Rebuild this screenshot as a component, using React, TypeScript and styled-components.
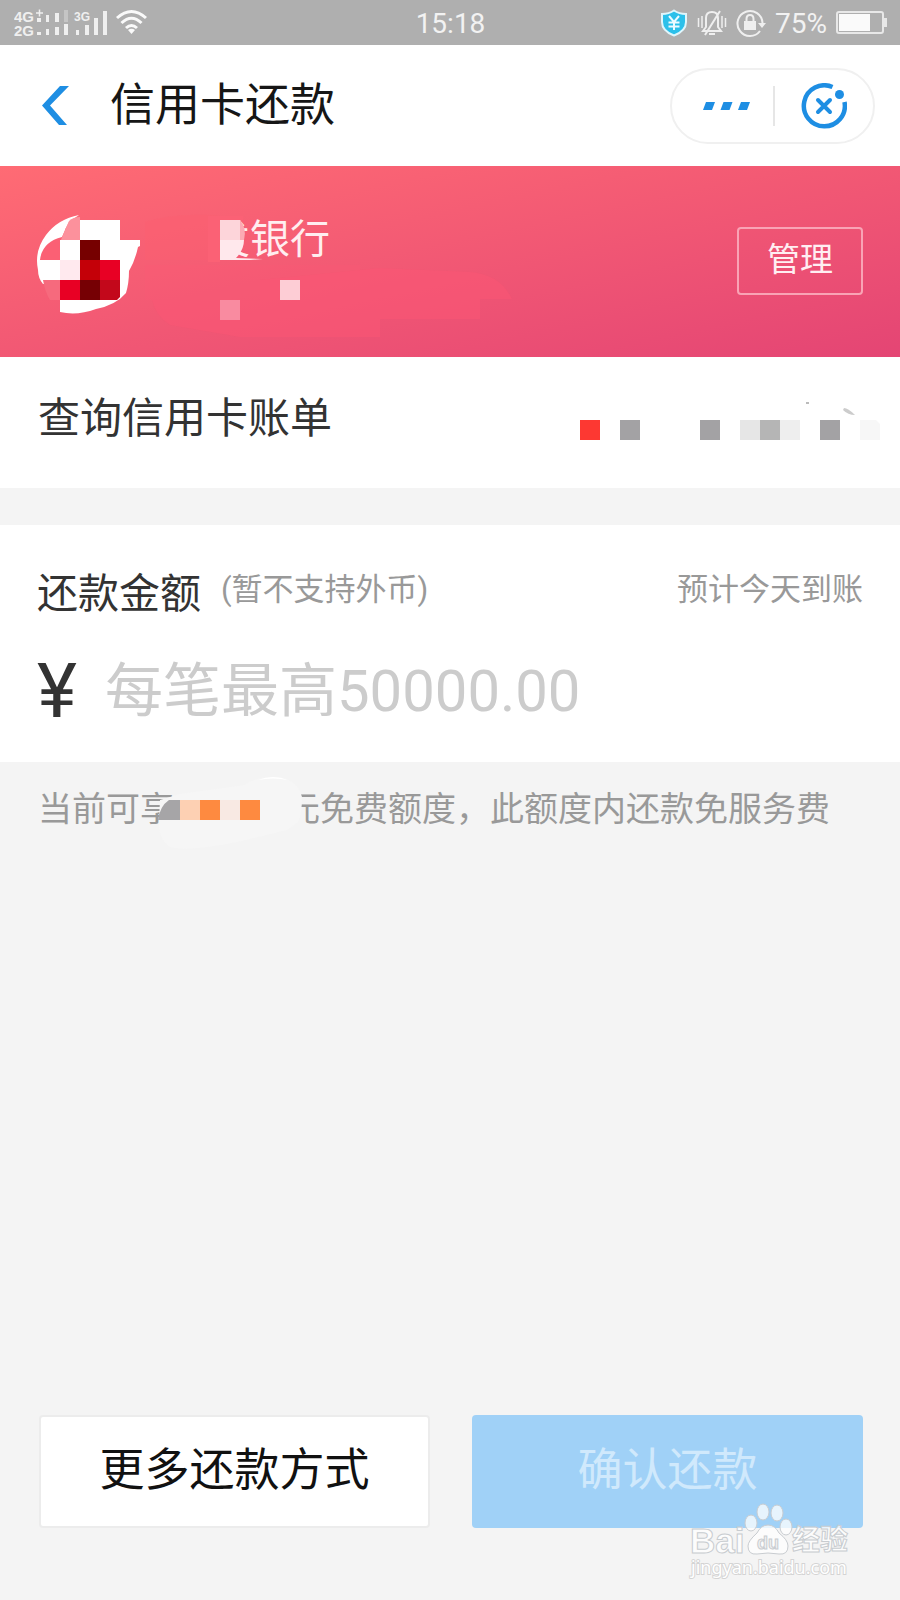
import React from "react";
import styled, { createGlobalStyle } from "styled-components";

const GlobalStyle = createGlobalStyle`
  *, *::before, *::after { box-sizing: border-box; }
  body {
    margin: 0;
    background: #f4f4f4;
    font-family: Roboto, "Noto Sans CJK SC", sans-serif;
  }
  button, input { font-family: inherit; }
  svg { display: block; flex: none; }
`;

const Page = styled.div`
  position: relative;
  display: flex;
  flex-direction: column;
  min-height: 100vh;
  background: #f4f4f4;
`;

const StatusBar = styled.div`
  display: grid;
  grid-template-columns: 1fr auto 1fr;
  align-items: center;
  height: 45px;
  padding: 0 13px 0 14px;
  background: #afafaf;
  color: #f2f2f2;
`;

const StatusGroup = styled.div<{ $end?: boolean }>`
  display: flex;
  align-items: center;
  justify-content: ${(p) => (p.$end ? "flex-end" : "flex-start")};
  gap: 9px;
`;

const StatusText = styled.span`
  font-size: 28px;
  line-height: 32px;
  padding-top: 2px;
`;

const Header = styled.header`
  display: flex;
  align-items: center;
  height: 121px;
  padding: 0 25px 0 38px;
  background: #fff;
`;

const IconButton = styled.button`
  display: flex;
  align-items: center;
  justify-content: center;
  padding: 0;
  border: 0;
  background: none;
  cursor: pointer;
`;

const Title = styled.h1`
  flex: 1;
  margin: 0 0 0 40px;
  font-size: 45px;
  font-weight: 400;
  line-height: 60px;
  color: #161616;
`;

const Capsule = styled.div`
  display: flex;
  align-items: center;
  width: 205px;
  height: 76px;
  border: 2px solid #f0f0f0;
  border-radius: 38px;

  ${IconButton} {
    width: 50%;
    height: 40px;
  }
  ${IconButton}:first-child {
    padding-left: 10px;
  }
  ${IconButton} + ${IconButton} {
    border-left: 2px solid #e6e6e6;
  }
`;

const Banner = styled.section`
  position: relative;
  display: flex;
  align-items: center;
  height: 191px;
  padding: 4px 37px 0;
  background: linear-gradient(to bottom right, #ff6b74, #e44574);
`;

const BankName = styled.h2`
  flex: 1;
  align-self: flex-start;
  margin: 40px 0 0 69px;
  font-size: 40px;
  font-weight: 400;
  line-height: 60px;
  color: #ffeef0;
`;

const ManageButton = styled.button`
  align-self: flex-start;
  width: 126px;
  height: 68px;
  margin-top: 57px;
  padding: 0 0 2px;
  border: 2px solid #f9a3b5;
  border-radius: 4px;
  background: none;
  font-size: 33px;
  line-height: 48px;
  color: #ffeef2;
  cursor: pointer;
`;

const Overlay = styled.svg`
  position: absolute;
  top: 0;
  left: 0;
  pointer-events: none;
`;

const BillLink = styled.a`
  display: flex;
  justify-content: space-between;
  height: 131px;
  padding: 28px 20px 0 38px;
  background: #fff;
  color: #333;
  font-size: 42px;
  line-height: 68px;
  text-decoration: none;
`;

const AmountCard = styled.section`
  margin-top: 37px;
  padding: 38px 37px 22px;
  background: #fff;
`;

const AmountHead = styled.div`
  display: flex;
  align-items: flex-start;
`;

const AmountLabel = styled.label`
  font-size: 41px;
  line-height: 62px;
  color: #333;
`;

const Hint = styled.span<{ $end?: boolean }>`
  margin-left: ${(p) => (p.$end ? "auto" : "20px")};
  font-size: 31px;
  line-height: 54px;
  color: #999;
`;

const AmountRow = styled.div`
  display: flex;
  align-items: center;
  margin-top: 17px;
`;

const Currency = styled.span`
  width: 68px;
  font-size: 76px;
  line-height: 98px;
  color: #333;
`;

const AmountInput = styled.input`
  flex: 1;
  min-width: 0;
  height: 98px;
  padding: 0;
  border: 0;
  outline: 0;
  background: none;
  font-size: 58px;
  color: #333;
  &::placeholder { color: #ccc; opacity: 1; }
`;

const Note = styled.p`
  position: relative;
  display: flex;
  justify-content: space-between;
  width: 792px;
  max-width: 100%;
  margin: 0 0 0 38px;
  padding-top: 23px;
  font-size: 34px;
  line-height: 48px;
  color: #999;
`;

const NoteMosaic = styled(Overlay)`
  left: 112px;
`;

const Actions = styled.footer`
  display: grid;
  grid-template-columns: 1fr 1fr;
  gap: 42px;
  margin-top: auto;
  padding: 40px 37px 72px 39px;
`;

const ActionButton = styled.button<{ $primary?: boolean }>`
  height: 113px;
  padding: 0 0 2px;
  border: ${(p) => (p.$primary ? "0" : "2px solid #ececec")};
  border-radius: 4px;
  background: ${(p) => (p.$primary ? "#a0d1f7" : "#fff")};
  font-size: 45px;
  line-height: 60px;
  color: ${(p) => (p.$primary ? "#d0e9fc" : "#111")};
`;

const Watermark = styled.svg`
  position: absolute;
  right: 42px;
  bottom: 16px;
`;

const SignalIcons = () => (
  <svg width="134" height="30" viewBox="0 0 134 30" fill="#efefef" aria-hidden="true">
    <g fontFamily="Liberation Sans, sans-serif" fontWeight="700">
      <text x="0" y="14" fontSize="15">4G</text>
      <text x="0" y="28" fontSize="15">2G</text>
      <text x="60" y="13" fontSize="12">3G</text>
    </g>
    <path d="M22 5h7M25.500 1.500v7" stroke="#efefef" strokeWidth="1.500" />
    <path d="M23 10h4v4h-4zM32 7h3v7h-3zM41 5h4v9h-4zM23 24h4v3h-4zM32 21h3v6h-3zM41 19h4v8h-4zM50 16h4v11h-4zM62 22h3v5h-3zM71 17h4v10h-4zM80 10h4v17h-4zM89 3h4v24h-4z" />
    <path d="M50 2h4v12h-4z" opacity="0.35" />
    <g fill="none" stroke="#fafafa" strokeWidth="3">
      <path d="M103 10q14.500-13 29 0" />
      <path d="M107.500 15q10-9.500 20 0" />
      <path d="M112 20q5.500-5 11 0" />
    </g>
    <path d="M114 22q3.500-2.500 7 0l-3.500 4z" fill="#fafafa" />
  </svg>
);

const ShieldIcon = () => (
  <svg width="28" height="28" viewBox="0 0 28 28" aria-hidden="true">
    <path d="M14 1.500Q19 5 26 5v8q0 9-12 13.500Q2 22 2 13V5q7 0 12-3.500z" fill="#2cc0ea" stroke="#dff6fc" strokeWidth="2" />
    <path d="M9 7l5 6 5-6M8.500 13.500h11M8.500 17.500h11M14 13v8" fill="none" stroke="#eefbff" strokeWidth="2" />
  </svg>
);

const MuteIcon = () => (
  <svg width="30" height="28" viewBox="0 0 30 28" fill="none" stroke="#efefef" strokeWidth="2" aria-hidden="true">
    <path d="M6 22l3-4v-9q0-6 6-6t6 6v9l3 4zM12 25h6M23 2L8 26" />
    <path d="M1.500 9v9M5 7v12M25 7v12M28.500 9v9" strokeWidth="1.500" />
  </svg>
);

const LockIcon = () => (
  <svg width="30" height="30" viewBox="0 0 30 30" aria-hidden="true">
    <path d="M24 23a12.500 12.500 0 1 1 2.500-8" fill="none" stroke="#efefef" strokeWidth="2" />
    <path d="M22 15h8l-4 5zM8 13h12v9H8z" fill="#efefef" />
    <path d="M10.500 13v-2q0-4 3.500-4t3.500 4v2" fill="none" stroke="#efefef" strokeWidth="2" />
  </svg>
);

const BatteryIcon = () => (
  <svg width="51" height="24" viewBox="0 0 51 24" aria-hidden="true">
    <rect x="1" y="1" width="46" height="21" rx="2" fill="none" stroke="#e8e8e8" strokeWidth="2" />
    <path d="M3 3h31v17H3z" fill="#fafafa" />
    <path d="M48 7h3v9h-3z" fill="#e8e8e8" />
  </svg>
);

const BackIcon = () => (
  <svg width="32" height="40" viewBox="0 0 32 40" aria-hidden="true">
    <path d="M22 0h9L12 19.500 29 39h-8L4 19.500z" fill="#1e8ee3" />
  </svg>
);

const MoreIcon = () => (
  <svg width="48" height="8" viewBox="0 0 48 8" fill="#1e8ee3" aria-hidden="true">
    <path d="M3 0h9L9 8H0zM20.500 0h9l-3 8h-9zM38 0h9l-3 8h-9z" />
  </svg>
);

const CloseIcon = () => (
  <svg width="46" height="46" viewBox="0 0 46 46" fill="none" stroke="#1e8ee3" aria-hidden="true">
    <path d="M31.500 4A20.500 20.500 0 1 0 43.500 19" strokeWidth="4.500" />
    <path d="M17 17l12 12M29 17l-12 12" strokeWidth="4" strokeLinecap="round" />
    <circle cx="38.500" cy="11.500" r="4.500" fill="#1e8ee3" stroke="none" />
  </svg>
);

const BankLogo = () => (
  <svg width="104" height="100" viewBox="37 214 104 100" aria-hidden="true">
    <path d="M79 215Q58 219 46 235T38 270q0 8 5 14h17v28q17 4 36-3 20-4 30-16 3-10 3-22 6-10 9-24l2-1v-6h-20v-20H80l-15 10 4-8z" fill="#fff" />
    <path d="M40 260q2-18 22-23l4-9 14-8v20H60v20z" fill="#fb6074" />
    <path d="M65 230l4-9q4-4 11-4v23H61z" fill="#fc919c" />
    <path d="M60 260h20v20H60z" fill="#ffe9ee" />
    <path d="M80 240h20v20H80z" fill="#760000" />
    <path d="M80 260h20v20H80z" fill="#c40008" />
    <path d="M100 260h20v20h-20zM60 280h20v20H60z" fill="#e80024" />
    <path d="M80 280h20v20H80z" fill="#760004" />
    <path d="M100 280h20v17l-3 3h-17z" fill="#c3081b" />
    <path d="M43 280h17v20h-10q-5-8-7-20z" fill="#f66a7d" />
  </svg>
);

const BankMosaic = () => (
  <Overlay width="560" height="191" viewBox="0 166 560 191" aria-hidden="true">
    <path d="M145 222q35-10 75-6v44h-75z" fill="#fd5f71" opacity="0.4" />
    <path d="M145 265h215v15h-60v20H145z" fill="#fb5a73" opacity="0.3" />
    <path d="M260 280l120-12 90 4q30 2 42 27h-32v20h-100v18H240l-70-12q-15-10-18-25h108z" fill="#fb5573" opacity="0.5" />
    <path d="M208 216h35v4h-23v42h-12z" fill="#fb6175" />
    <path d="M220 220h20q3 4 4 10v10h-24z" fill="#fdd5da" />
    <path d="M240 220q7 8 4 20h-4z" fill="#fcaab4" />
    <path d="M220 240h24q0 10-8 18l27 1-13 1h-30z" fill="#ffe8ec" />
    <path d="M280 280h20v20h-20z" fill="#fdcdd5" />
    <path d="M220 300h20v20h-20z" fill="#f98ba0" />
  </Overlay>
);

const BillMosaic = () => (
  <svg width="300" height="60" viewBox="580 385 300 60" aria-hidden="true">
    <path d="M580 420h20v20h-20z" fill="#fd3832" />
    <path d="M620 420h20v20h-20zM700 420h20v20h-20zM820 420h20v20h-20z" fill="#a3a2a4" />
    <path d="M740 420h20v20h-20z" fill="#e6e6e6" />
    <path d="M760 420h20v20h-20z" fill="#b5b5b5" />
    <path d="M780 420h20v20h-20z" fill="#eee" />
    <path d="M860 420h16l4 4v16h-20z" fill="#f7f7f7" />
    <path d="M844 408q4 0 11 7-7 0-12-5z" fill="#ccc" />
    <path d="M806 402h3v2h-3z" fill="#bbb" />
  </svg>
);

const AllowanceMosaic = () => (
  <NoteMosaic width="160" height="90" viewBox="150 762 160 90" aria-hidden="true">
    <path d="M160 800l20-6 65-9q12-9 32-8 20 2 25 20 0 16-4 25l-11 8-50 12q-50 10-67 5-12-8-11-27z" fill="#f6f6f6" />
    <path d="M258 780q15-6 30 0-15-3-30 0z" fill="#fff" />
    <path d="M169 800h11v20h-22q2-14 11-20z" fill="#a6a5a7" />
    <path d="M180 800h20v20h-20z" fill="#fdd0b3" />
    <path d="M200 800h20v20h-20zM240 800h20v20h-20z" fill="#fe8a40" />
    <path d="M220 800h20v20h-20z" fill="#f8e9e3" />
  </NoteMosaic>
);

const BaiduMark = () => (
  <Watermark width="170" height="84" viewBox="0 0 170 84" role="img" aria-label="Baidu 经验 jingyan.baidu.com">
    <g fill="#fff" fillOpacity="0.75" stroke="#c8ccd0" strokeWidth="1">
      <ellipse cx="63" cy="23" rx="6" ry="8" />
      <ellipse cx="75" cy="12" rx="6" ry="8" />
      <ellipse cx="89" cy="13" rx="6" ry="8" />
      <ellipse cx="98" cy="27" rx="6" ry="8" />
      <path d="M80 25q-7 0-11 8-9 8-9 13 0 9 9 8 11-2 22 0 9 1 9-8 0-6-9-13-4-8-11-8z" />
      <g fontFamily="Liberation Sans, Noto Sans CJK SC, sans-serif" fontWeight="700">
        <text x="2" y="53" fontSize="35">Bai</text>
        <text x="69" y="49" fontSize="18" fill="#eee">du</text>
        <text x="104" y="50" fontSize="28">经验</text>
      </g>
    </g>
    <text x="3" y="74" fontSize="18" fontFamily="Noto Sans, sans-serif" fill="#fff" stroke="#d4d4d4" strokeWidth="2" paintOrder="stroke">jingyan.baidu.com</text>
  </Watermark>
);

export default function App() {
  return (
    <>
      <GlobalStyle />
      <Page>
        <StatusBar>
          <StatusGroup>
            <SignalIcons />
          </StatusGroup>
          <StatusText>15:18</StatusText>
          <StatusGroup $end>
            <ShieldIcon />
            <MuteIcon />
            <LockIcon />
            <StatusText>75%</StatusText>
            <BatteryIcon />
          </StatusGroup>
        </StatusBar>

        <Header>
          <IconButton type="button" aria-label="返回">
            <BackIcon />
          </IconButton>
          <Title>信用卡还款</Title>
          <Capsule>
            <IconButton type="button" aria-label="更多">
              <MoreIcon />
            </IconButton>
            <IconButton type="button" aria-label="关闭">
              <CloseIcon />
            </IconButton>
          </Capsule>
        </Header>

        <main>
          <Banner>
            <BankLogo />
            <BankName>发银行</BankName>
            <ManageButton type="button">管理</ManageButton>
            <BankMosaic />
          </Banner>

          <BillLink href="#bill">
            <span>查询信用卡账单</span>
            <BillMosaic />
          </BillLink>

          <AmountCard>
            <AmountHead>
              <AmountLabel htmlFor="amount">还款金额</AmountLabel>
              <Hint>(暂不支持外币)</Hint>
              <Hint $end>预计今天到账</Hint>
            </AmountHead>
            <AmountRow>
              <Currency>¥</Currency>
              <AmountInput id="amount" inputMode="decimal" placeholder="每笔最高50000.00" />
            </AmountRow>
          </AmountCard>

          <Note>
            <span>当前可享</span>
            <span>元免费额度，此额度内还款免服务费</span>
            <AllowanceMosaic />
          </Note>
        </main>

        <Actions>
          <ActionButton type="button">更多还款方式</ActionButton>
          <ActionButton type="button" $primary>确认还款</ActionButton>
        </Actions>

        <BaiduMark />
      </Page>
    </>
  );
}
